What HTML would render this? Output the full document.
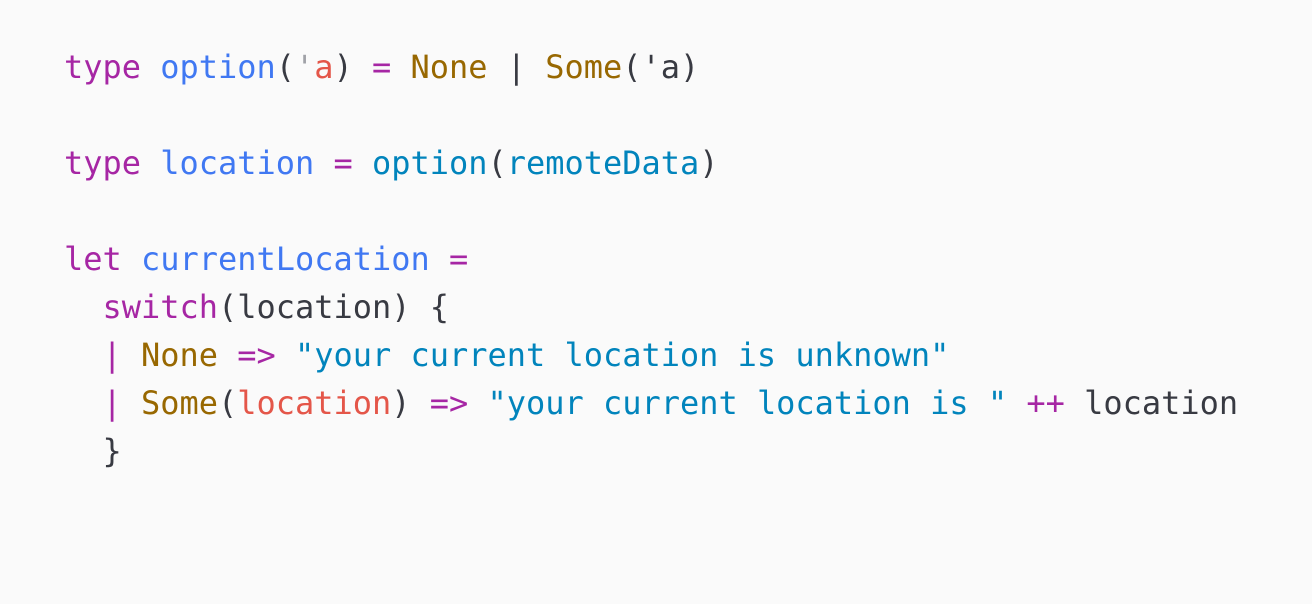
<!DOCTYPE html>
<html><head><meta charset="utf-8"><style>
html,body{margin:0;padding:0;background:#fafafa;width:1312px;height:604px;overflow:hidden}
pre{margin:0;position:absolute;left:64px;top:43px;font-family:"DejaVu Sans Mono","Liberation Mono",monospace;font-size:31.98px;line-height:48px;color:#383a42}
.k{color:#a626a4}.b{color:#4078f2}.r{color:#e45649}.o{color:#986801}.c{color:#0184bc}.g{color:#a0a1a7}
</style></head><body><pre><span class="k">type</span> <span class="b">option</span>(<span class="g">'</span><span class="r">a</span>) <span class="k">=</span> <span class="o">None</span> | <span class="o">Some</span>('a)

<span class="k">type</span> <span class="b">location</span> <span class="k">=</span> <span class="c">option</span>(<span class="c">remoteData</span>)

<span class="k">let</span> <span class="b">currentLocation</span> <span class="k">=</span>
  <span class="k">switch</span>(location) {
  <span class="k">|</span> <span class="o">None</span> <span class="k">=&gt;</span> <span class="c">"your current location is unknown"</span>
  <span class="k">|</span> <span class="o">Some</span>(<span class="r">location</span>) <span class="k">=&gt;</span> <span class="c">"your current location is "</span> <span class="k">++</span> location
  }
</pre></body></html>
